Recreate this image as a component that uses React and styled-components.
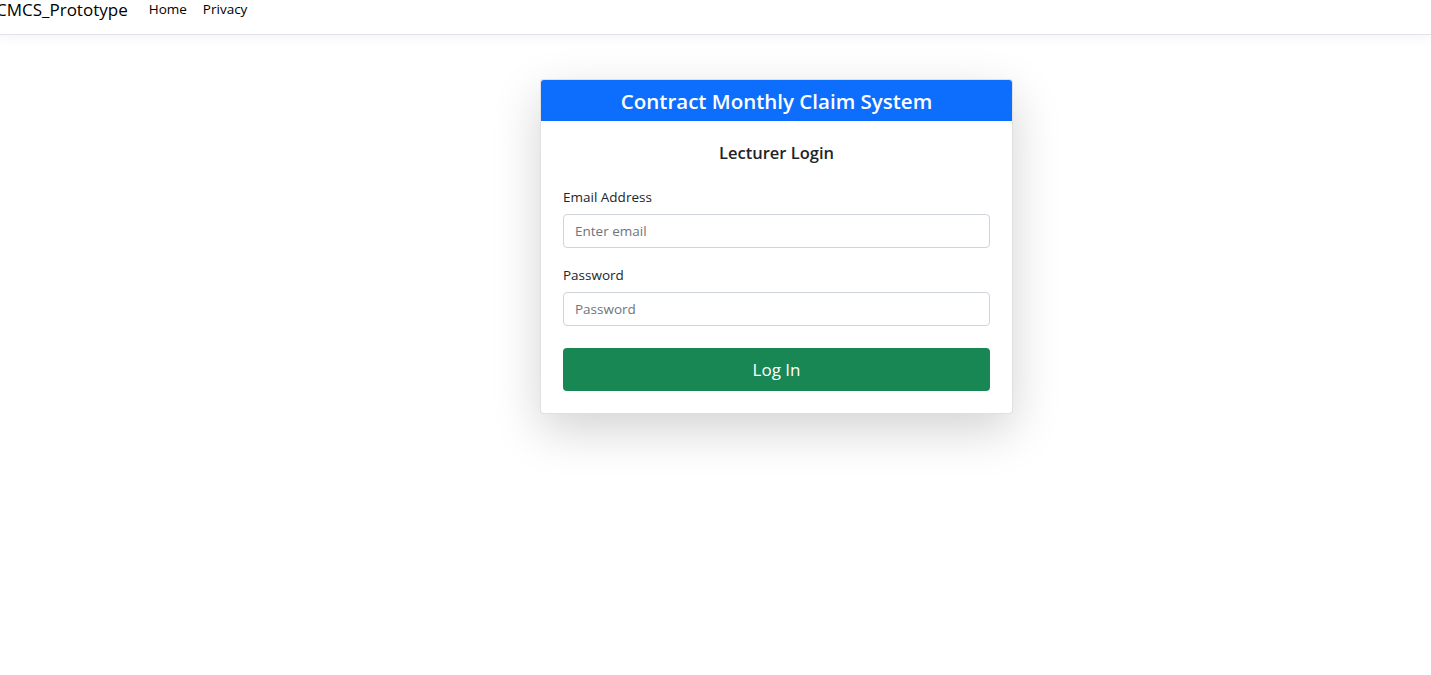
import React from 'react';
import styled, { createGlobalStyle } from 'styled-components';

const GlobalStyle = createGlobalStyle`
  html, body {
    margin: 0;
    padding: 0;
    background: #fff;
    min-height: 100vh;
    font-family: "Open Sans", "Noto Sans", sans-serif;
    color: #212529;
  }
  * { box-sizing: border-box; }
`;

const Navbar = styled.nav`
  height: 35px;
  display: flex;
  align-items: center;
  gap: 21px;
  margin-left: -4px;
  border-bottom: 1px solid #e2e3e8;
  box-shadow: 0 4px 12px rgba(0, 0, 0, 0.04);
  padding-bottom: 16px;
`;

const Brand = styled.a`
  font-size: 17px;
  color: #000;
  text-decoration: none;
`;

const NavLinks = styled.div`
  display: flex;
  gap: 16px;
`;

const NavLink = styled.a`
  font-size: 13.5px;
  color: #000;
  text-decoration: none;
`;

const Main = styled.main`
  display: flex;
  padding: 44px 0 80px 540px;
`;

const Card = styled.div`
  width: 473px;
  background: #fff;
  border: 1px solid rgba(0, 0, 0, 0.12);
  border-radius: 4px;
  box-shadow: 0 16px 48px rgba(0, 0, 0, 0.175);
  overflow: hidden;
`;

const CardHeader = styled.div`
  height: 41px;
  background: #0d6efd;
  color: #fff;
  display: flex;
  align-items: center;
  justify-content: center;
  font-size: 20.5px;
  font-weight: 600;
`;

const CardBody = styled.form`
  padding: 20px 22px 22px;
  display: flex;
  flex-direction: column;
`;

const Heading = styled.h5`
  margin: 0 0 23px;
  text-align: center;
  font-size: 16.5px;
  font-weight: 600;
  line-height: 24px;
`;

const Field = styled.div`
  display: flex;
  flex-direction: column;
  margin-bottom: ${(p) => p.$gap}px;
`;

const Label = styled.label`
  font-size: 13.5px;
  line-height: 18px;
  margin-bottom: 8px;
`;

const Input = styled.input`
  height: 34px;
  padding: 0 11px;
  font-family: inherit;
  font-size: 13.5px;
  color: #212529;
  border: 1px solid #ced4da;
  border-radius: 4px;
  outline: none;
  &::placeholder {
    color: #6c757d;
  }
`;

const Button = styled.button`
  height: 43px;
  background: #198754;
  color: #fff;
  border: none;
  border-radius: 4px;
  font-family: inherit;
  font-size: 17px;
  cursor: pointer;
`;

export default function App() {
  return (
    <>
      <GlobalStyle />
      <Navbar>
        <Brand href="#">CMCS_Prototype</Brand>
        <NavLinks>
          <NavLink href="#">Home</NavLink>
          <NavLink href="#">Privacy</NavLink>
        </NavLinks>
      </Navbar>
      <Main>
        <Card>
          <CardHeader>Contract Monthly Claim System</CardHeader>
          <CardBody onSubmit={(e) => e.preventDefault()}>
            <Heading>Lecturer Login</Heading>
            <Field $gap={18}>
              <Label>Email Address</Label>
              <Input type="email" placeholder="Enter email" />
            </Field>
            <Field $gap={22}>
              <Label>Password</Label>
              <Input type="password" placeholder="Password" />
            </Field>
            <Button type="submit">Log In</Button>
          </CardBody>
        </Card>
      </Main>
    </>
  );
}
